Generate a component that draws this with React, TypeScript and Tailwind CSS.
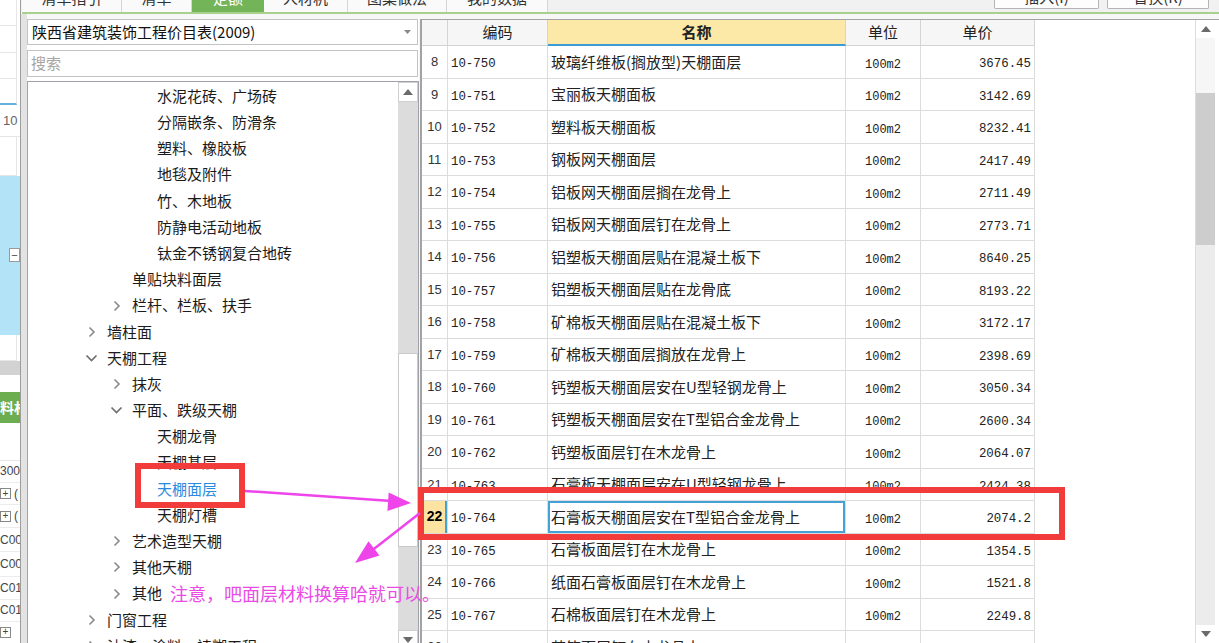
import React from "react";

type TreeItem = { t: string; l: 1 | 2 | 3; c?: "r" | "d"; sel?: boolean };

const treeItems: TreeItem[] = [
  { t: "水泥花砖、广场砖", l: 3 },
  { t: "分隔嵌条、防滑条", l: 3 },
  { t: "塑料、橡胶板", l: 3 },
  { t: "地毯及附件", l: 3 },
  { t: "竹、木地板", l: 3 },
  { t: "防静电活动地板", l: 3 },
  { t: "钛金不锈钢复合地砖", l: 3 },
  { t: "单贴块料面层", l: 2 },
  { t: "栏杆、栏板、扶手", l: 2, c: "r" },
  { t: "墙柱面", l: 1, c: "r" },
  { t: "天棚工程", l: 1, c: "d" },
  { t: "抹灰", l: 2, c: "r" },
  { t: "平面、跌级天棚", l: 2, c: "d" },
  { t: "天棚龙骨", l: 3 },
  { t: "天棚基层", l: 3 },
  { t: "天棚面层", l: 3, sel: true },
  { t: "天棚灯槽", l: 3 },
  { t: "艺术造型天棚", l: 2, c: "r" },
  { t: "其他天棚", l: 2, c: "r" },
  { t: "其他", l: 2, c: "r" },
  { t: "门窗工程", l: 1, c: "r" },
  { t: "油漆、涂料、裱糊工程", l: 1, c: "r" },
];

const levelPad: Record<number, string> = {
  1: "pl-[60px]",
  2: "pl-[85px]",
  3: "pl-[110px]",
};

const rows: [string, string, string, string][] = [
  ["8", "10-750", "玻璃纤维板(搁放型)天棚面层", "3676.45"],
  ["9", "10-751", "宝丽板天棚面板", "3142.69"],
  ["10", "10-752", "塑料板天棚面板", "8232.41"],
  ["11", "10-753", "钢板网天棚面层", "2417.49"],
  ["12", "10-754", "铝板网天棚面层搁在龙骨上", "2711.49"],
  ["13", "10-755", "铝板网天棚面层钉在龙骨上", "2773.71"],
  ["14", "10-756", "铝塑板天棚面层贴在混凝土板下", "8640.25"],
  ["15", "10-757", "铝塑板天棚面层贴在龙骨底", "8193.22"],
  ["16", "10-758", "矿棉板天棚面层贴在混凝土板下", "3172.17"],
  ["17", "10-759", "矿棉板天棚面层搁放在龙骨上", "2398.69"],
  ["18", "10-760", "钙塑板天棚面层安在U型轻钢龙骨上", "3050.34"],
  ["19", "10-761", "钙塑板天棚面层安在T型铝合金龙骨上", "2600.34"],
  ["20", "10-762", "钙塑板面层钉在木龙骨上", "2064.07"],
  ["21", "10-763", "石膏板天棚面层安在U型轻钢龙骨上", "2424.38"],
  ["22", "10-764", "石膏板天棚面层安在T型铝合金龙骨上", "2074.2"],
  ["23", "10-765", "石膏板面层钉在木龙骨上", "1354.5"],
  ["24", "10-766", "纸面石膏板面层钉在木龙骨上", "1521.8"],
  ["25", "10-767", "石棉板面层钉在木龙骨上", "2249.8"],
  ["26", "10-768", "苇箔面层钉在木龙骨上", "1882.6"],
];

const tabs: { t: string; w: string; on?: boolean }[] = [
  { t: "清单指引", w: "w-[100px]" },
  { t: "清单", w: "w-[70px]" },
  { t: "定额", w: "w-[72px]", on: true },
  { t: "人材机", w: "w-[84px]" },
  { t: "图集做法", w: "w-[99px]" },
  { t: "我的数据", w: "w-[101px]" },
];

function ChevRight() {
  return (
    <svg width="8" height="12" viewBox="0 0 8 12">
      <polyline points="1.5,1.5 6,6 1.5,10.5" fill="none" stroke="#8a8a8a" strokeWidth="1.6" />
    </svg>
  );
}

function ChevDown() {
  return (
    <svg width="13" height="8" viewBox="0 0 13 8" className="ml-[-3px]">
      <polyline points="1.5,1.5 6.5,6.5 11.5,1.5" fill="none" stroke="#6f6f6f" strokeWidth="1.7" />
    </svg>
  );
}

function TriUp() {
  return (
    <svg width="10" height="6" viewBox="0 0 10 6">
      <polygon points="0,6 5,0 10,6" fill="#6a6a6a" />
    </svg>
  );
}

function TriDown() {
  return (
    <svg width="10" height="6" viewBox="0 0 10 6">
      <polygon points="0,0 10,0 5,6" fill="#6a6a6a" />
    </svg>
  );
}

function LeftStrip() {
  return (
    <div className="w-[20px] h-full flex flex-col bg-white text-[12px] text-[#444] font-['Liberation_Sans',sans-serif] overflow-hidden">
      <div className="h-[27px] border-b border-[#e6e6e6] border-r border-r-[#e6e6e6] w-[17px]" />
      <div className="h-[27px] border-b border-[#e6e6e6] border-r border-r-[#e6e6e6] w-[17px]" />
      <div className="h-[27px] border-b border-[#e6e6e6] border-r border-r-[#e6e6e6] w-[17px]" />
      <div className="h-[27px] border-b-2 border-[#62b2dc] border-r border-r-[#e6e6e6] w-[17px]" />
      <div className="h-[32px] flex items-center pl-[3px] border-b border-[#e6e6e6] text-[13px] text-[#666]">10</div>
      <div className="h-[40px] border-b border-[#e6e6e6] border-r border-r-[#e6e6e6] w-[17px]" />
      <div className="h-[163px] bg-[#b2e3f7] flex items-center justify-end">
        <div className="w-[11px] h-[14px] bg-white border border-[#9a9a9a] flex items-center justify-center text-[11px] leading-none">−</div>
      </div>
      <div className="h-[27px] border-b border-[#e6e6e6] border-r border-r-[#e6e6e6] w-[17px]" />
      <div className="h-[14px] bg-[#d2d2d2]" />
      <div className="h-[18px]" />
      <div className="h-[32px] bg-[#6cae4f] text-white font-bold text-[14px] flex items-center font-['Noto_Sans_CJK_SC',sans-serif] whitespace-nowrap">料材</div>
      <div className="h-[38px] border-b border-[#e6e6e6]" />
      <div className="h-[23px] flex items-center whitespace-nowrap border-b border-[#ececec]">300(</div>
      <div className="h-[23px] flex items-center whitespace-nowrap border-b border-[#ececec]">
        <span className="w-[11px] h-[11px] border border-[#888] flex items-center justify-center text-[10px] leading-none">+</span>
        <span className="ml-[3px]">(</span>
      </div>
      <div className="h-[23px] flex items-center whitespace-nowrap border-b border-[#ececec]">
        <span className="w-[11px] h-[11px] border border-[#888] flex items-center justify-center text-[10px] leading-none">+</span>
        <span className="ml-[3px]">(</span>
      </div>
      <div className="h-[25px] flex items-center whitespace-nowrap border-b border-[#ececec]">C00(</div>
      <div className="h-[25px] flex items-center whitespace-nowrap border-b border-[#ececec]">C00(</div>
      <div className="h-[24px] flex items-center whitespace-nowrap border-b border-[#ececec]">C01(</div>
      <div className="h-[22px] flex items-center whitespace-nowrap border-b border-[#ececec]">C01(</div>
      <div className="h-[22px] flex items-center whitespace-nowrap">
        <span className="w-[11px] h-[11px] border border-[#888] flex items-center justify-center text-[10px] leading-none">+</span>
      </div>
    </div>
  );
}

function TopBar() {
  return (
    <div className="h-[12px] flex bg-[#f1f1f1] pl-[1px] overflow-hidden font-['Noto_Sans_CJK_SC',sans-serif] text-[15px]">
      {tabs.map((tb) => (
        <div
          key={tb.t}
          className={
            tb.on
              ? "h-[12px] flex justify-center bg-[#72b457] text-white overflow-hidden " + tb.w
              : "h-[12px] flex justify-center bg-[#fafafa] text-[#333] border-r border-[#d6d6d6] overflow-hidden " + tb.w
          }
        >
          <span className="leading-[16px] mt-[-10px] whitespace-nowrap">{tb.t}</span>
        </div>
      ))}
      <div className="flex-1" />
      <div className="w-[105px] h-[9px] bg-[#fdfdfd] border border-t-0 border-[#b4b4b4] rounded-b-[2px] flex justify-center overflow-hidden text-[#333]">
        <span className="leading-[16px] mt-[-11px] whitespace-nowrap">插入(I)</span>
      </div>
      <div className="w-[8px]" />
      <div className="w-[102px] h-[9px] bg-[#fdfdfd] border border-t-0 border-[#b4b4b4] rounded-b-[2px] flex justify-center overflow-hidden text-[#333]">
        <span className="leading-[16px] mt-[-11px] whitespace-nowrap">替换(R)</span>
      </div>
      <div className="w-[10px]" />
    </div>
  );
}

function TreeScroll() {
  return (
    <div className="w-[20px] flex flex-col bg-[#dedede] shrink-0">
      <div className="h-[20px] bg-white border border-[#cfcfcf] flex items-center justify-center shrink-0">
        <TriUp />
      </div>
      <div className="h-[251px] bg-[#dcdcdc] shrink-0" />
      <div className="h-[194px] bg-white border border-[#c9c9c9] shrink-0" />
      <div className="h-[83px] bg-[#dcdcdc] shrink-0" />
      <div className="h-[20px] bg-white border border-[#cfcfcf] flex items-center justify-center shrink-0">
        <TriDown />
      </div>
    </div>
  );
}

function LeftPanel() {
  return (
    <div className="w-[392px] flex flex-col bg-white font-['Noto_Sans_CJK_SC',sans-serif]">
      <div className="h-[26px] border border-[#c3c3c3] flex items-center pl-[4px] pr-[6px] text-[15px] text-[#111] w-[391px]">
        <span className="flex-1 whitespace-nowrap">陕西省建筑装饰工程价目表(2009)</span>
        <svg width="7" height="4" viewBox="0 0 7 4">
          <polygon points="0,0 7,0 3.5,4" fill="#8a8a8a" />
        </svg>
      </div>
      <div className="h-[5px]" />
      <div className="h-[27px] border border-[#c3c3c3] flex items-center pl-[3px] text-[15px] text-[#a5a5a5] w-[391px]">
        搜索
      </div>
      <div className="h-[4px]" />
      <div className="flex-1 border border-[#9fa3a8] border-b-0 flex overflow-hidden">
        <div className="flex-1 pt-[1px] flex flex-col overflow-hidden">
          {treeItems.map((it) => (
            <div
              key={it.t}
              className={"h-[26.2px] shrink-0 flex items-center text-[15px] " + levelPad[it.l]}
            >
              <div className="w-[19px] shrink-0 flex items-center">
                {it.c === "r" ? <ChevRight /> : it.c === "d" ? <ChevDown /> : null}
              </div>
              <span className={it.sel ? "text-[#2a8ae0] whitespace-nowrap" : "text-[#1b1b1b] whitespace-nowrap"}>
                {it.t}
              </span>
            </div>
          ))}
        </div>
        <TreeScroll />
      </div>
    </div>
  );
}

function TableScroll() {
  return (
    <div className="w-[20px] flex flex-col shrink-0 bg-[#ececec] border-l border-[#dcdcdc]">
      <div className="h-[18px] bg-white flex items-center justify-center shrink-0">
        <TriUp />
      </div>
      <div className="h-[55px] bg-[#f6f6f6] shrink-0" />
      <div className="h-[152px] bg-[#cdcdcd] shrink-0" />
      <div className="flex-1 bg-[#ececec]" />
      <div className="h-[18px] bg-white flex items-center justify-center shrink-0">
        <TriDown />
      </div>
    </div>
  );
}

function TablePanel() {
  return (
    <div className="flex-1 flex bg-white border-l-2 border-t border-[#a3a3a3]">
      <div className="flex-1 flex flex-col overflow-hidden">
        <div className="h-[26px] shrink-0 flex font-['Noto_Sans_CJK_SC',sans-serif] text-[15px] text-[#222]">
          <div className="w-[26px] bg-[#f6f6f6] border-r border-b border-[#d4d4d4]" />
          <div className="w-[100px] bg-[#f6f6f6] border-r border-b border-[#d4d4d4] flex items-center justify-center">编码</div>
          <div className="w-[298px] bg-[#fde9a7] border-r border-[#d4d4d4] border-b-2 border-b-[#3d9bd3] flex items-center justify-center font-bold">名称</div>
          <div className="w-[75px] bg-[#f6f6f6] border-r border-b border-[#d4d4d4] flex items-center justify-center">单位</div>
          <div className="w-[114px] bg-[#f6f6f6] border-r border-b border-[#d4d4d4] flex items-center justify-center">单价</div>
        </div>
        {rows.map((r) => {
          const sel = r[0] === "22";
          return (
            <div key={r[0]} className="h-[32.5px] shrink-0 flex text-[#222]">
              <div
                className={
                  sel
                    ? "w-[26px] border-r border-b border-[#dcdcdc] flex items-center justify-center bg-[#fde3a2] font-bold text-[14px] text-black shadow-[inset_-2px_0_0_#45a2d6] font-['Liberation_Sans',sans-serif]"
                    : "w-[26px] border-r border-b border-[#dcdcdc] flex items-center justify-center text-[13px] text-[#333] font-['Liberation_Sans',sans-serif]"
                }
              >
                {r[0]}
              </div>
              <div className="w-[100px] border-r border-b border-[#dcdcdc] flex items-center pl-[3px] pt-[6px] text-[12.4px] font-['Liberation_Mono',monospace]">
                {r[1]}
              </div>
              <div
                className={
                  sel
                    ? "w-[298px] border-r border-b border-[#dcdcdc] flex items-center pl-[3px] text-[15px] whitespace-nowrap font-['Noto_Sans_CJK_SC',sans-serif] shadow-[inset_0_0_0_2px_#45a2d6]"
                    : "w-[298px] border-r border-b border-[#dcdcdc] flex items-center pl-[3px] text-[15px] whitespace-nowrap font-['Noto_Sans_CJK_SC',sans-serif]"
                }
              >
                {r[2]}
              </div>
              <div className="w-[75px] border-r border-b border-[#dcdcdc] flex items-center justify-center pt-[6px] text-[12px] font-['Liberation_Mono',monospace]">
                100m2
              </div>
              <div className="w-[114px] border-r border-b border-[#dcdcdc] flex items-center justify-end pr-[3px] pt-[6px] text-[12.4px] font-['Liberation_Mono',monospace]">
                {r[3]}
              </div>
            </div>
          );
        })}
      </div>
      <TableScroll />
      <div className="w-[4px] bg-white" />
    </div>
  );
}

function Annotations() {
  return (
    <>
      <div className="absolute left-[135px] top-[463px] w-[110px] h-[45px] border-[6px] border-[#f23b3b] pointer-events-none" />
      <div className="absolute left-[418px] top-[487px] w-[647px] h-[53px] border-[6px] border-[#f23b3b] pointer-events-none" />
      <svg className="absolute left-0 top-0 pointer-events-none" width="1219" height="643" viewBox="0 0 1219 643">
        <line x1="245" y1="491" x2="392" y2="501" stroke="#ee44ea" strokeWidth="2.5" />
        <polygon points="411,503 388.7,492.4 387.4,511" fill="#ee44ea" />
        <line x1="420" y1="513" x2="370" y2="552" stroke="#ee44ea" strokeWidth="2.5" />
        <polygon points="355,563 368.5,541.3 379.5,555.5" fill="#ee44ea" />
      </svg>
      <div className="absolute left-[170px] top-[581px] text-[18px] leading-[24px] text-[#ea4be6] whitespace-nowrap font-['Noto_Sans_CJK_SC',sans-serif] pointer-events-none">
        注意，吧面层材料换算哈就可以。
      </div>
    </>
  );
}

export default function App() {
  return (
    <div className="relative w-[1219px] h-[643px] overflow-hidden bg-white flex">
      <LeftStrip />
      <div className="w-[1px] h-full bg-[#9d9d9d]" />
      <div className="flex-1 flex flex-col">
        <TopBar />
        <div className="h-[2px] ml-[1px] bg-[#a9d18e]" />
        <div className="flex-1 flex pt-[5px] bg-[#f7f7f7] overflow-hidden">
          <div className="w-[6px] bg-[#e3e3e3] mt-[-5px]" />
          <LeftPanel />
          <div className="w-[1px]" />
          <TablePanel />
        </div>
      </div>
      <Annotations />
    </div>
  );
}
